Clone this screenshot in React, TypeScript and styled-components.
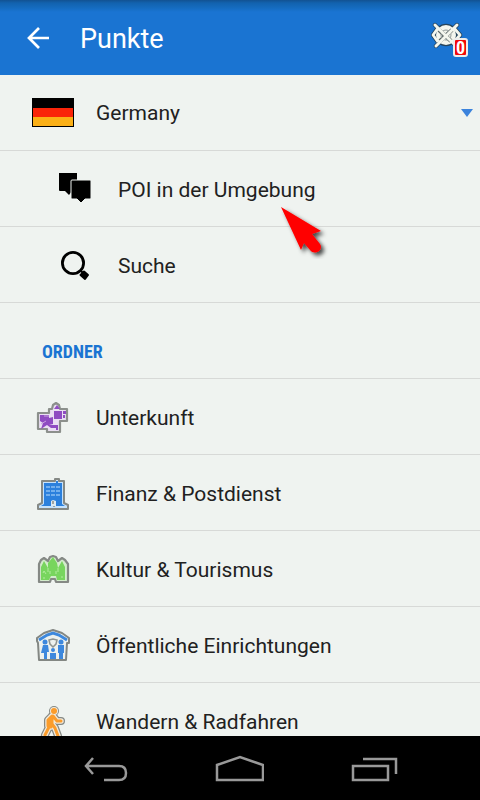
import React from "react";
import styled, { createGlobalStyle } from "styled-components";

const GlobalStyle = createGlobalStyle`
  *, *::before, *::after { box-sizing: border-box; }
  body { margin: 0; font-family: Roboto, "Noto Sans", sans-serif; background: #eff3f0; color: #212121; }
  button, select, a { font: inherit; color: inherit; }
  svg { display: block; }
`;

const Screen = styled.div`
  display: flex;
  flex-direction: column;
  height: 100vh;
`;

const AppBar = styled.header`
  flex: none;
  display: flex;
  align-items: center;
  height: 75px;
  padding: 0 12px 0 26px;
  color: #fff;
  background: linear-gradient(#125292 0, #1262ae 3px, #156cc0 8px, #1a74d2 12px);
`;

const IconButton = styled.button`
  display: flex;
  padding: 0;
  border: 0;
  background: none;
  cursor: pointer;
`;

const Title = styled.h1`
  flex: 1;
  margin: 0 0 0 28px;
  padding-top: 2px;
  font-size: 27px;
  line-height: 36px;
  font-weight: 400;
`;

const HideAction = styled(IconButton)`
  position: relative;
  color: #fff;
`;

const Badge = styled.span`
  position: absolute;
  right: 0;
  bottom: 0;
  width: 15px;
  height: 19px;
  border: 2px solid #ececec;
  border-radius: 3px;
  background: #f40808;
  color: #fff;
  font-family: "Roboto Condensed", Roboto, sans-serif;
  font-size: 18px;
  line-height: 16px;
  font-weight: 700;
  text-align: center;
`;

const Content = styled.main`
  flex: 1;
  min-height: 0;
  overflow: hidden;
`;

const List = styled.ul`
  margin: 0;
  padding: 0;
  list-style: none;
`;

const Item = styled.li`
  position: relative;
  height: 76px;
  border-bottom: 1px solid #d7d9d7;
`;

const Row = styled.a<{ $nested?: boolean }>`
  display: flex;
  align-items: center;
  gap: 22px;
  height: 100%;
  padding-top: 2px;
  padding-left: ${(p) => (p.$nested ? 54 : 32)}px;
  font-size: 21px;
  line-height: 28px;
  text-decoration: none;
`;

const CountryRow = styled(Row).attrs({ as: "label" })`
  padding-top: 0;
  padding-right: 7px;
`;

const IconSlot = styled.span`
  flex: none;
  display: flex;
  justify-content: center;
  width: 42px;
`;

const CountrySelect = styled.select`
  flex: 1;
  min-width: 0;
  height: 100%;
  padding: 0;
  border: 0;
  background: none;
  appearance: none;
`;

const SectionTitle = styled.h2`
  display: flex;
  align-items: center;
  height: 76px;
  margin: 0;
  padding: 22px 0 0 42px;
  border-bottom: 1px solid #d7d9d7;
  color: #1a74d2;
  font-family: "Roboto Condensed", Roboto, sans-serif;
  font-size: 18px;
  line-height: 24px;
  font-weight: 700;
`;

const Pointer = styled.svg`
  position: absolute;
  left: 276px;
  top: 52px;
  z-index: 1;
  pointer-events: none;
`;

const NavBar = styled.nav`
  flex: none;
  display: flex;
  align-items: center;
  justify-content: center;
  gap: 86px;
  height: 64px;
  padding: 2px 0 0;
  background: #000;
`;

const BackArrow = () => (
  <svg width="26" height="24" viewBox="0 0 26 24" fill="none" stroke="#fff" strokeWidth="2.7">
    <path d="M23 12H3M13 2 3 12l10 10" />
  </svg>
);

const HiddenEye = () => (
  <svg width="37" height="38" viewBox="0 1 37 38">
    <g fill="none" stroke="#26445c" strokeWidth="4.4" strokeLinecap="round" strokeLinejoin="round">
      <path d="M7 10 2 17l5 7M23 10l6 7-6 7M4 7l20 20M26 7 5 28" />
      <circle cx="15" cy="17" r="9" />
    </g>
    <circle cx="15" cy="17" r="10" fill="#f4f6ee" />
    <path d="M7 10 2 17l5 7M23 10l6 7-6 7" fill="none" stroke="#f4f6ee" strokeWidth="2.8" strokeLinejoin="round" />
    <path d="m8 12 12 11M21 12 9 23" stroke="#5b6666" strokeWidth="4.2" />
    <circle cx="15" cy="17" r="5" fill="none" stroke="#8f9898" strokeWidth="1" />
    <path d="M4 7l20 20M26 7 5 28" stroke="#f4f6ee" strokeWidth="3" strokeLinecap="round" />
  </svg>
);

const Flag = () => (
  <svg width="42" height="29" viewBox="0 0 42 29">
    <path fill="#000" d="M0 0h42v29H0z" />
    <path fill="#fa2409" d="M1 10h40v9H1z" />
    <path fill="#fbb017" d="M1 19h40v9H1z" />
  </svg>
);

const DropArrow = () => (
  <svg width="12" height="8" viewBox="0 0 12 8">
    <path d="M0 0h12L6 8z" fill="#3b83dc" />
  </svg>
);

const PlacesIcon = () => (
  <svg width="34" height="34" viewBox="0 3 34 34">
    <path d="M2 2h16q1 0 1 1v17q0 1-1 1h-4l-3 4-4-4H2q-1 0-1-1V3q0-1 1-1z" />
    <path d="M14 10h18q1 0 1 1v17q0 1-1 1h-5l-4 4-4-4h-5q-1 0-1-1V11q0-1 1-1z" stroke="#eff3f0" strokeWidth="1" />
  </svg>
);

const SearchIcon = () => (
  <svg width="30" height="30" viewBox="0 1 30 30">
    <circle cx="13" cy="13" r="10.6" fill="none" stroke="#000" strokeWidth="2.8" />
    <path d="m20 20 3 3" stroke="#000" strokeWidth="2" />
    <path d="m24 21.500 4 3.500-3 4-4.500-4z" stroke="#000" strokeWidth="2" strokeLinejoin="round" />
  </svg>
);

const LodgingIcon = () => (
  <svg width="34" height="34" viewBox="0 0 34 34">
    <path
      d="M2 12h11V8h3l1-4 3-2 3 2 1 4h7v12h-7v11H11v-3H2z"
      fill="#eadff3" stroke="#8c908c" strokeWidth="2.200" strokeLinejoin="round"
    />
    <path fill="#8f4cc2" d="M4 14h9v3l4-1v7l-4 1h9v5h-2v-2h-5l-4-3-6 4 2-6-3-2z" />
    <path fill="#8f4cc2" d="M18 10h8v8h-8zM27 10h3v3h-3zM27 14h2v3h-2zM18 8l3-4 3 4z" />
    <path d="M8 15h5M5 23l5-3" fill="none" stroke="#c8a4df" strokeWidth="1" />
  </svg>
);

const BankIcon = () => (
  <svg width="34" height="34" viewBox="0 0 34 34">
    <path
      d="M6 4h13V2h4v2h5v22l4 2v4H2v-4l4-2z"
      fill="#c6e2fc" stroke="#858985" strokeWidth="2" strokeLinejoin="round"
    />
    <path fill="#2b80dd" d="M8 6h18v21l3 2H5l3-2zM20 4h2v2h-2z" />
    <path d="M10 10h15M10 14h15M10 18h15" stroke="#8bbff2" strokeWidth="1.6" strokeDasharray="4 1" />
    <path fill="#dceaf3" d="M15 29v-5l2-1 3 1v5z" />
    <path d="M17 24v3M18 29v1" stroke="#8d8d86" strokeWidth="1.5" />
  </svg>
);

const CastleIcon = () => (
  <svg width="34" height="34" viewBox="0 0 34 34">
    <path
      d="M3 29V11l2-4 3-2 4 3 2-4 3-1 3 1 2 4 4-3 3 2 3 4v18H20l-1-3h-4l-1 3z"
      fill="#d3eccb" stroke="#858985" strokeWidth="2.200" strokeLinejoin="round"
    />
    <path fill="#78d55e" d="M5 27V14l3-6 4 7v-5l5-6 4 6 1 5 4-7 3 6v13h-8l-1-4h-5l-2 4z" />
    <path d="M12 15v4M22 15v4M7 20l1-2 2 3M14 18v3M20 18v3M7 25h2M25 24h2" fill="none" stroke="#b2ed9d" strokeWidth="1" />
  </svg>
);

const PublicIcon = () => (
  <svg width="36" height="36" viewBox="0 0 36 36">
    <path
      d="M2 13v-3l7-5 9-3 9 3 7 5v5h-2l-1 17H4L3 15z"
      fill="#edf1ee" stroke="#838783" strokeWidth="2" strokeLinejoin="round"
    />
    <path d="m4 12 8-5 6-2 6 2 8 5" fill="none" stroke="#3d88dd" strokeWidth="3" />
    <g fill="#3d88dd">
      <circle cx="10" cy="14" r="2.5" />
      <path d="m8 17h5l1 7h-2v7H9v-6H6z" />
      <circle cx="18" cy="22" r="2" />
      <path d="M15 25h6v6h-6z" />
      <circle cx="26" cy="14" r="2.5" />
      <path d="M23 17h6v8h-1v6h-4v-6h-1z" />
    </g>
    <path d="m14 12 4-1 4 1-1 4-3 3-3-3z" fill="none" stroke="#8f9490" strokeWidth="1.5" />
  </svg>
);

const HikerIcon = () => {
  const body = "M17 11l-4 4v6l1 1-4 8M17 11v8l3 4 3 8M18 11l4 5h4M16 15v7";
  return (
    <svg width="34" height="34" viewBox="1 0 34 34">
      <g fill="none" strokeLinecap="round" strokeLinejoin="round">
        <path d={body} stroke="#858985" strokeWidth="8" />
        <circle cx="19" cy="6" r="5" fill="#858985" />
        <path d={body} stroke="#f3eadb" strokeWidth="5.5" />
        <circle cx="19" cy="6" r="4" fill="#f3eadb" />
        <path d={body} stroke="#fb9c2b" strokeWidth="3" />
        <circle cx="19" cy="6" r="3" fill="#fb9c2b" />
      </g>
    </svg>
  );
};

const navStroke = { fill: "none", stroke: "#999", strokeWidth: 2.5 };

const NavBack = () => (
  <svg width="46" height="28" viewBox="0 0 46 28" {...navStroke}>
    <path d="M11 3 4 11l7 8M4 11h33q7 0 7 7t-7 7H22" />
  </svg>
);

const NavHome = () => (
  <svg width="50" height="28" viewBox="0 0 50 28" {...navStroke}>
    <path d="M3 25V10l23-8 23 8v15z" />
  </svg>
);

const NavRecent = () => (
  <svg width="48" height="28" viewBox="0 0 48 28" {...navStroke}>
    <path d="M3 11h35v14H3zM13 4h33v15" />
  </svg>
);

const nested = [
  { label: "POI in der Umgebung", Icon: PlacesIcon, pointed: true },
  { label: "Suche", Icon: SearchIcon, pointed: false },
];

const folders = [
  { label: "Unterkunft", Icon: LodgingIcon },
  { label: "Finanz & Postdienst", Icon: BankIcon },
  { label: "Kultur & Tourismus", Icon: CastleIcon },
  { label: "Öffentliche Einrichtungen", Icon: PublicIcon },
  { label: "Wandern & Radfahren", Icon: HikerIcon },
];

export default function App() {
  return (
    <Screen>
      <GlobalStyle />
      <AppBar>
        <IconButton aria-label="Zurück"><BackArrow /></IconButton>
        <Title>Punkte</Title>
        <HideAction aria-label="Punkte ausblenden">
          <HiddenEye />
          <Badge>0</Badge>
        </HideAction>
      </AppBar>
      <Content>
        <List>
          <Item>
            <CountryRow>
              <IconSlot><Flag /></IconSlot>
              <CountrySelect aria-label="Land" defaultValue="Germany">
                <option>Germany</option>
              </CountrySelect>
              <DropArrow />
            </CountryRow>
          </Item>
          {nested.map(({ label, Icon, pointed }) => (
            <Item key={label}>
              <Row $nested href="#">
                <IconSlot><Icon /></IconSlot>
                {label}
              </Row>
              {pointed && (
                <Pointer width="56" height="56" viewBox="0 0 56 56" aria-hidden="true">
                  <defs>
                    <filter id="pointer-shadow" x="-20%" y="-20%" width="150%" height="150%">
                      <feDropShadow dx="3" dy="3" stdDeviation="2" floodColor="#000" floodOpacity="0.7" />
                    </filter>
                  </defs>
                  <path
                    d="M5 4 45 28l-9 3 8 10c4 6-5 12-10 6l-6-7-3 7z"
                    fill="#f00" filter="url(#pointer-shadow)"
                  />
                </Pointer>
              )}
            </Item>
          ))}
        </List>
        <SectionTitle>ORDNER</SectionTitle>
        <List>
          {folders.map(({ label, Icon }) => (
            <Item key={label}>
              <Row href="#">
                <IconSlot><Icon /></IconSlot>
                {label}
              </Row>
            </Item>
          ))}
        </List>
      </Content>
      <NavBar>
        <IconButton aria-label="Zurück"><NavBack /></IconButton>
        <IconButton aria-label="Startseite"><NavHome /></IconButton>
        <IconButton aria-label="Letzte Apps"><NavRecent /></IconButton>
      </NavBar>
    </Screen>
  );
}
